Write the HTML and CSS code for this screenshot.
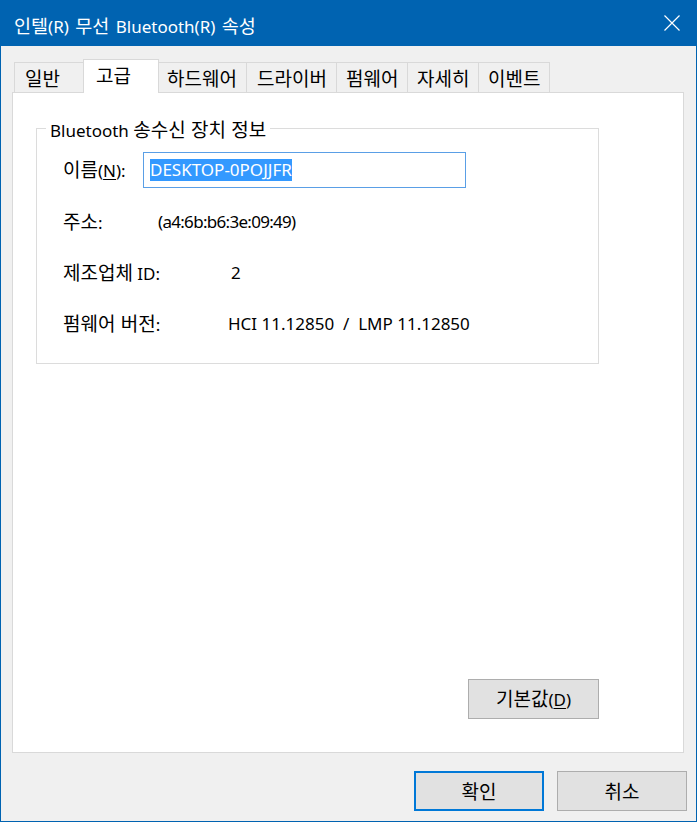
FILE: index.html
```html
<!DOCTYPE html>
<html lang="ko">
<head>
<meta charset="utf-8">
<title>인텔(R) 무선 Bluetooth(R) 속성</title>
<link rel="stylesheet" href="styles.css">
</head>
<body>
<div class="window">
  <div class="titlebar">
    <span class="title"><span class="ko-title">인텔</span>(R) <span class="ko-title">무선</span> Bluetooth(R) <span class="ko-title">속성</span></span>
    <svg class="close" width="16" height="16" viewBox="0 0 16 16"><path d="M0.5 0.5 L15.5 15.5 M15.5 0.5 L0.5 15.5" stroke="#fff" stroke-width="1.2" fill="none"/></svg>
  </div>
  <div class="tabs">
    <div class="tab">일반</div>
    <div class="tab selected">고급</div>
    <div class="tab tab-wide">하드웨어</div>
    <div class="tab tab-wide">드라이버</div>
    <div class="tab">펌웨어</div>
    <div class="tab">자세히</div>
    <div class="tab">이벤트</div>
  </div>
  <div class="panel">
    <div class="content">
      <div class="group">
        <span class="legend">Bluetooth <span class="ko">송수신 장치 정보</span></span>
        <div class="row row-input">
          <span class="label w-name"><span class="ko">이름</span>(<u>N</u>):</span>
          <div class="input"><span class="sel">DESKTOP-0POJJFR</span></div>
        </div>
        <div class="row">
          <span class="label w-addr"><span class="ko">주소</span>:</span>
          <span class="value value-addr">(a4:6b:b6:3e:09:49)</span>
        </div>
        <div class="row">
          <span class="label w-id"><span class="ko">제조업체</span> ID:</span>
          <span class="value">2</span>
        </div>
        <div class="row">
          <span class="label w-fw"><span class="ko">펌웨어 버전</span>:</span>
          <span class="value">HCI 11.12850&nbsp; / &nbsp;LMP 11.12850</span>
        </div>
      </div>
      <button class="btn btn-default-val"><span class="ko">기본값</span>(<u>D</u>)</button>
    </div>
  </div>
  <div class="footer">
    <button class="btn btn-ko btn-primary">확인</button>
    <button class="btn btn-ko">취소</button>
  </div>
</div>
</body>
</html>
```
FILE: styles.css
```css
html, body {
  margin: 0;
  padding: 0;
  background: #f0f0f0;
}
body {
  font-family: "Noto Sans", "Noto Sans CJK KR", sans-serif;
  font-size: 17px;
  color: #000;
}
.ko {
  font-family: "Noto Sans CJK KR", sans-serif;
  font-size: 19px;
}
.window {
  width: 697px;
  height: 822px;
  box-sizing: border-box;
  border: 1px solid #0063b1;
  border-top: 0;
  background: #f0f0f0;
  display: flex;
  flex-direction: column;
}
.titlebar {
  height: 46px;
  flex: none;
  background: #0063b1;
  color: #fff;
  display: flex;
  align-items: center;
  padding-left: 13px;
  padding-top: 5px;
  box-sizing: border-box;
}
.title {
  font-size: 17px;
  line-height: 22px;
  word-spacing: 2px;
}
.ko-title {
  font-family: "Noto Sans CJK KR", sans-serif;
  font-size: 18.5px;
}
.close {
  margin-left: auto;
  margin-right: 16px;
  margin-top: -5px;
}
.tabs {
  display: flex;
  align-items: flex-end;
  height: 33px;
  margin: 13px 0 0 13px;
  flex: none;
}
.tab {
  height: 30px;
  min-width: 72px;
  box-sizing: border-box;
  padding: 0 8px 0 9px;
  border: 1px solid #d9d9d9;
  border-bottom: 0;
  background: #f0f0f0;
  font-family: "Noto Sans CJK KR", sans-serif;
  font-size: 19px;
  line-height: 30px;
  margin-left: -1px;
}
.tab-wide {
  min-width: 91px;
  padding-left: 10px;
}
.tab:first-child {
  margin-left: 0;
  padding-left: 10px;
}
.tab.selected {
  height: 34px;
  min-width: 76px;
  margin: 0 -2px -1px -3px;
  padding-left: 12px;
  line-height: 30px;
  background: #fff;
  position: relative;
  z-index: 1;
}
.panel {
  margin: 0 12px 0 11px;
  height: 661px;
  box-sizing: border-box;
  border: 1px solid #d9d9d9;
  background: #fff;
  flex: none;
  padding-left: 23px;
}
.content {
  width: 563px;
  display: flex;
  flex-direction: column;
}
.group {
  margin-top: 35px;
  height: 236px;
  box-sizing: border-box;
  border: 1px solid #dcdcdc;
  display: flex;
  flex-direction: column;
  padding-left: 26px;
}
.legend {
  align-self: flex-start;
  margin: -11px 0 0 -17px;
  padding: 0 4px;
  background: #fff;
  line-height: 22px;
}
.row {
  display: flex;
  align-items: center;
  height: 34px;
  margin-top: 17px;
  line-height: 22px;
}
.row-input {
  height: 36px;
  margin-top: 10px;
}
.label {
  flex: none;
}
.label u, .btn u {
  text-underline-offset: 2px;
}
.w-name { width: 80px; }
.w-addr { width: 95px; }
.w-id { width: 168px; }
.w-fw { width: 165px; }
.value-addr {
  letter-spacing: -0.7px;
}
.input {
  width: 323px;
  height: 36px;
  box-sizing: border-box;
  border: 1px solid #5a9fe6;
  padding-left: 6px;
  display: flex;
  align-items: center;
}
.sel {
  background: #3399ff;
  color: #fff;
  line-height: 22px;
}
.btn {
  font-family: inherit;
  font-size: 17px;
  line-height: 22px;
  color: #000;
  width: 130px;
  height: 40px;
  box-sizing: border-box;
  background: #e1e1e1;
  border: 1px solid #adadad;
  padding: 0;
  margin: 0;
}
.btn-ko {
  font-family: "Noto Sans CJK KR", sans-serif;
  font-size: 19px;
}
.btn-default-val {
  align-self: flex-end;
  width: 131px;
  margin-top: 315px;
}
.btn-primary {
  border: 2px solid #0078d7;
}
.footer {
  display: flex;
  justify-content: flex-end;
  gap: 13px;
  margin-top: 18px;
  padding-right: 9px;
}
```
